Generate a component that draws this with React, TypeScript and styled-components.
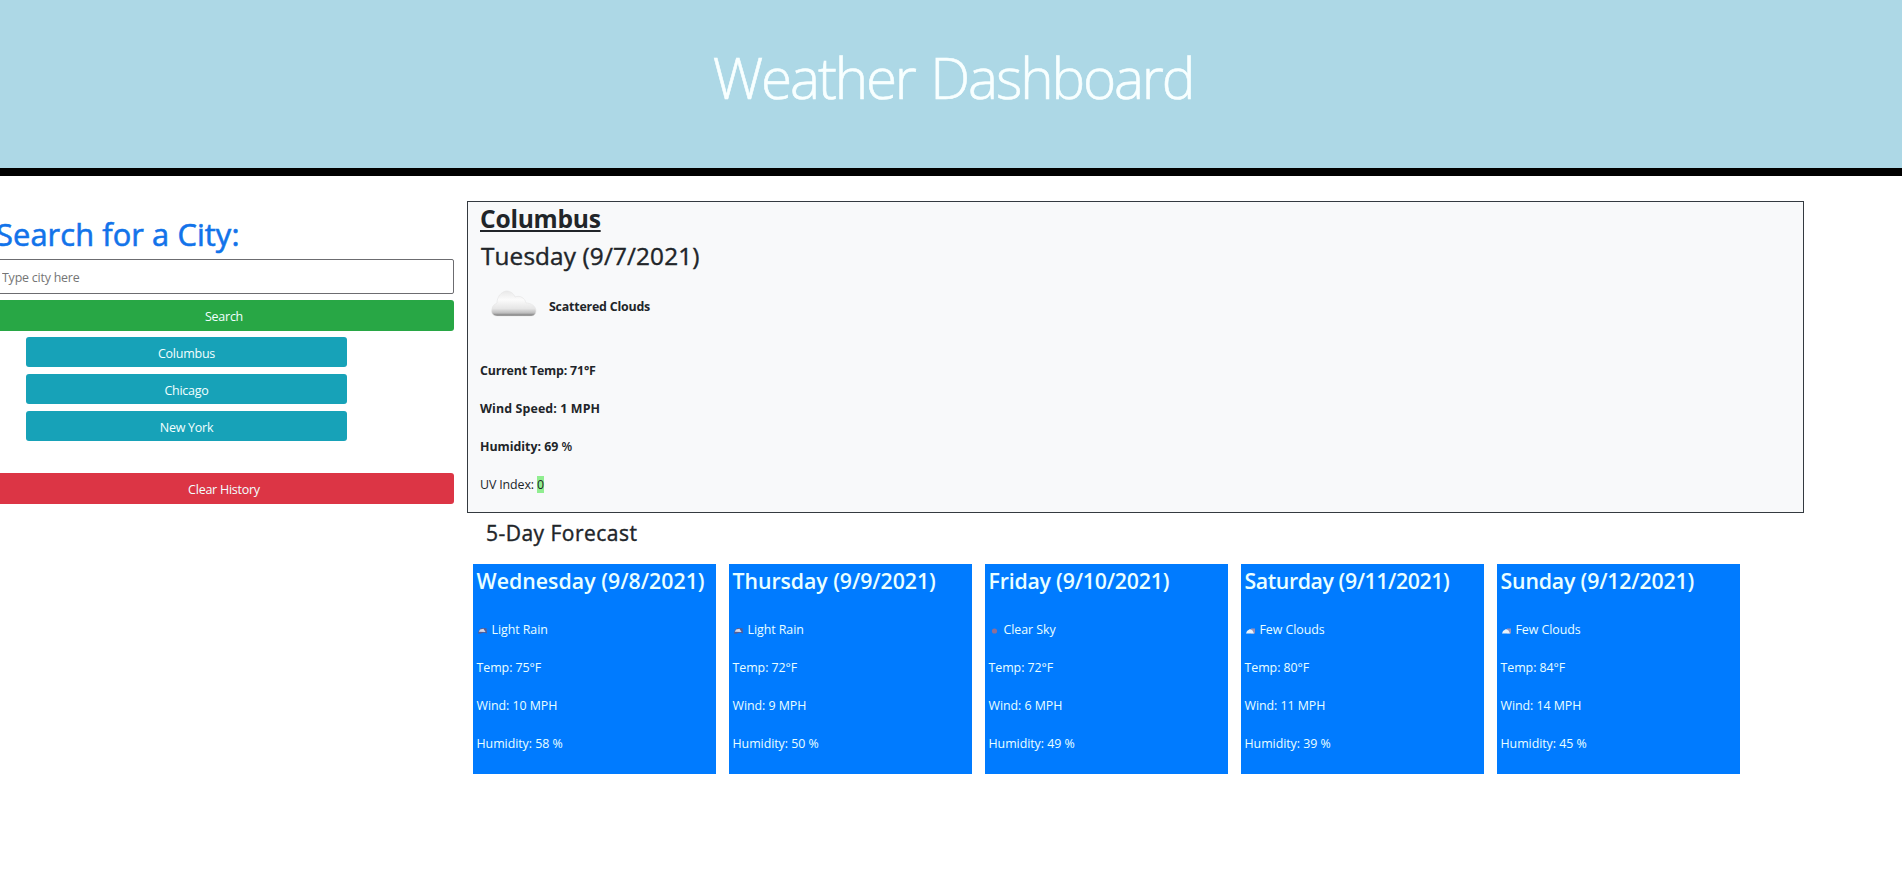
import React from "react";
import styled, { createGlobalStyle } from "styled-components";

const GlobalStyle = createGlobalStyle`
  *, *::before, *::after { box-sizing: border-box; }
  html { overflow: hidden; }
  body {
    margin: 0;
    background: #fff;
    color: #212529;
    font-family: "Open Sans", "Noto Sans", sans-serif;
    overflow: hidden;
  }
  h1, h2, h3, h4, p { margin: 0; white-space: nowrap; }
`;

const Header = styled.header`
  height: 176px;
  padding-top: 37px;
  background: #add8e6;
  border-bottom: 8px solid #000;
  text-align: center;
`;

const Title = styled.h1`
  padding-left: 4px;
  font-size: 56.6px;
  font-weight: 300;
  line-height: 82px;
  letter-spacing: -2.15px;
  word-spacing: 3px;
  color: #f8ffff;
  -webkit-text-stroke: 0.6px #f8ffff;
`;

const Main = styled.main`
  display: flex;
  align-items: flex-start;
  padding-top: 25px;
`;

const Sidebar = styled.aside`
  flex: none;
  width: 460px;
  margin-left: -6px;
  margin-right: 13px;
  padding-top: 12px;
`;

const SearchTitle = styled.h2`
  padding-left: 2px;
  font-size: 30.8px;
  font-weight: 400;
  line-height: 42px;
  letter-spacing: 0.1px;
  color: #1273ea;
  -webkit-text-stroke: 0.6px #1273ea;
`;

const CityInput = styled.input`
  display: block;
  width: 100%;
  height: 35px;
  margin: 4px 0 6px;
  padding: 3px 7px 1px;
  border: 1px solid #6c6c70;
  border-radius: 2px;
  background: #fff;
  font: 12.4px "Open Sans", sans-serif;
  letter-spacing: -0.2px;
  &::placeholder { color: #757575; opacity: 1; }
`;

const tones = { search: "#28a745", city: "#17a2b8", clear: "#dc3545" };

const Button = styled.button<{ $tone: keyof typeof tones }>`
  display: block;
  width: 100%;
  height: ${(p) => (p.$tone === "city" ? 30 : 31)}px;
  padding: 2px 0 0;
  border: 0;
  border-radius: 3px;
  background: ${(p) => tones[p.$tone]};
  color: #f2ffff;
  font: 12.5px "Open Sans", sans-serif;
  letter-spacing: -0.25px;
`;

const History = styled.div`
  display: grid;
  gap: 7px;
  width: 321px;
  margin: 6px 0 32px 32px;
`;

const Content = styled.div`
  flex: none;
  width: 1337px;
`;

const Current = styled.section`
  height: 312px;
  padding: 0 12px;
  border: 1px solid #343a40;
  background: #f8f9fa;
`;

const City = styled.h3`
  font-size: 24.6px;
  font-weight: 700;
  line-height: 34px;
  letter-spacing: -0.25px;
  text-decoration: underline;
  text-decoration-thickness: 2px;
  text-underline-offset: 2px;
`;

const Today = styled.h3`
  padding-left: 1px;
  font-size: 24.3px;
  font-weight: 400;
  line-height: 39px;
  margin-bottom: 1px;
  letter-spacing: 0.15px;
  -webkit-text-stroke: 0.4px #212529;
`;

const Condition = styled.div`
  display: flex;
  align-items: center;
  height: 62px;
  padding-left: 10px;
  gap: 11px;
`;

const Stats = styled.div`
  padding-top: 14px;
`;

const Stat = styled.p<{ $bold?: boolean; $spacing?: number }>`
  font-size: 12.4px;
  font-weight: ${(p) => (p.$bold ? 700 : 400)};
  line-height: 38px;
  letter-spacing: ${(p) => p.$spacing ?? -0.05}px;
`;

const Light = styled.span`
  font-weight: 600;
`;

const Uv = styled.span`
  display: inline-block;
  line-height: 17px;
  background: #90ee90;
`;

const ForecastTitle = styled.h3`
  padding-left: 19px;
  font-size: 21px;
  font-weight: 400;
  line-height: 40px;
  letter-spacing: 0.48px;
  -webkit-text-stroke: 0.4px #212529;
`;

const Cards = styled.div`
  display: flex;
  gap: 13px;
  margin: 11px 0 0 6px;
`;

const Card = styled.article`
  flex: none;
  width: 243px;
  height: 210px;
  padding: 0 3.5px;
  background: #007bff;
  color: #eaffff;
`;

const Day = styled.h4<{ $spacing: number }>`
  font-size: 21.3px;
  font-weight: 600;
  line-height: 34px;
  margin-bottom: 13px;
  letter-spacing: ${(p) => p.$spacing}px;
`;

const SkyLine = styled(Stat)`
  display: flex;
  align-items: center;
  gap: 3px;
`;

const CloudIcon = styled.svg`
  margin-top: -6px;
`;

function Cloud() {
  return (
    <CloudIcon width="48" height="30" viewBox="0 0 48 30">
      <defs>
        <linearGradient id="cloud" x1="0" y1="0" x2="0" y2="1">
          <stop offset="0" stopColor="#e9e9e9" />
          <stop offset="0.35" stopColor="#fbfbfb" />
          <stop offset="0.7" stopColor="#e6e6e6" />
          <stop offset="0.88" stopColor="#bdbdbd" />
          <stop offset="1" stopColor="#6d6d6d" />
        </linearGradient>
      </defs>
      <path
        d="M7 27C2 27 1 23 2 20C2 17 5 15 7 14C7 8 11 3 16 2C21 2 24 5 25 8C30 6 35 9 36 14C41 14 46 17 46 22C46 25 44 27 41 27Z"
        fill="url(#cloud)"
        stroke="#e4e4e4"
        strokeWidth="0.6"
      />
    </CloudIcon>
  );
}

type Sky = "rain" | "clear" | "few";

function SkyIcon({ sky }: { sky: Sky }) {
  return (
    <svg width="12" height="12" viewBox="0 0 12 12">
      {sky === "clear" && <circle cx="5.5" cy="7" r="2.6" fill="#8f6f96" />}
      {sky === "rain" && (
        <>
          <path d="M1 9.5L2 6L4.5 4L9.5 4.2L10 9.5L7 8.5L3 9.8Z" fill="#565c92" />
          <path d="M1.8 7.8L3 5.4L6.5 4.8L8.5 8Z" fill="#d5d6e4" />
        </>
      )}
      {sky === "few" && (
        <>
          <rect x="6" y="4.5" width="4" height="5" fill="#9b90b5" />
          <path d="M1 9.5L2 7L5 5L7.5 6.5L9 9.5Z" fill="#e8f2fa" />
        </>
      )}
    </svg>
  );
}

const cities = ["Columbus", "Chicago", "New York"];

const forecast: {
  day: string;
  spacing: number;
  sky: Sky;
  label: string;
  temp: number;
  wind: number;
  humidity: number;
}[] = [
  { day: "Wednesday (9/8/2021)", spacing: 0.03, sky: "rain", label: "Light Rain", temp: 75, wind: 10, humidity: 58 },
  { day: "Thursday (9/9/2021)", spacing: -0.06, sky: "rain", label: "Light Rain", temp: 72, wind: 9, humidity: 50 },
  { day: "Friday (9/10/2021)", spacing: -0.2, sky: "clear", label: "Clear Sky", temp: 72, wind: 6, humidity: 49 },
  { day: "Saturday (9/11/2021)", spacing: -0.41, sky: "few", label: "Few Clouds", temp: 80, wind: 11, humidity: 39 },
  { day: "Sunday (9/12/2021)", spacing: -0.17, sky: "few", label: "Few Clouds", temp: 84, wind: 14, humidity: 45 },
];

export default function App() {
  return (
    <>
      <GlobalStyle />
      <Header>
        <Title>Weather Dashboard</Title>
      </Header>
      <Main>
        <Sidebar>
          <SearchTitle>Search for a City:</SearchTitle>
          <CityInput placeholder="Type city here" />
          <Button $tone="search">Search</Button>
          <History>
            {cities.map((c) => (
              <Button key={c} $tone="city">{c}</Button>
            ))}
          </History>
          <Button $tone="clear">Clear History</Button>
        </Sidebar>
        <Content>
          <Current>
            <City>Columbus</City>
            <Today>Tuesday (9/7/2021)</Today>
            <Condition>
              <Cloud />
              <Stat $bold $spacing={-0.2}>Scattered Clouds</Stat>
            </Condition>
            <Stats>
              <Stat $bold $spacing={-0.18}>Current Temp: 71°F</Stat>
              <Stat $bold $spacing={0.12}>Wind Speed: 1 MPH</Stat>
              <Stat $bold $spacing={-0.02}>Humidity: 69 <Light>%</Light></Stat>
              <Stat $spacing={-0.12}>UV Index: <Uv>0</Uv></Stat>
            </Stats>
          </Current>
          <ForecastTitle>5-Day Forecast</ForecastTitle>
          <Cards>
            {forecast.map((f) => (
              <Card key={f.day}>
                <Day $spacing={f.spacing}>{f.day}</Day>
                <SkyLine><SkyIcon sky={f.sky} />{f.label}</SkyLine>
                <Stat>Temp: {f.temp}°F</Stat>
                <Stat>Wind: {f.wind} MPH</Stat>
                <Stat>Humidity: {f.humidity} %</Stat>
              </Card>
            ))}
          </Cards>
        </Content>
      </Main>
    </>
  );
}
